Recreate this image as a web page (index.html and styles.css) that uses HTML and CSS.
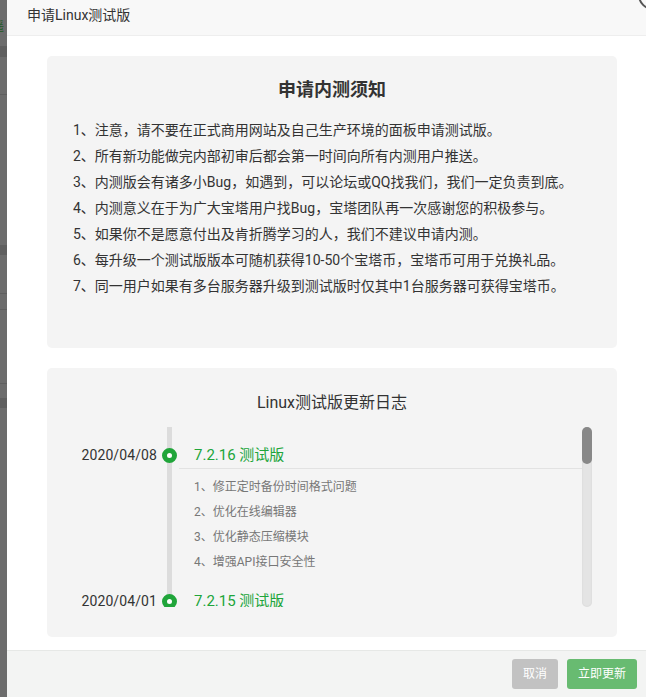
FILE: index.html
```html
<!DOCTYPE html>
<html lang="zh-CN">
<head>
<meta charset="utf-8">
<title>申请Linux测试版</title>
<link rel="stylesheet" href="styles.css">
</head>
<body>
<div class="page">
  <div class="backdrop">
    <span class="bd-row bd-r1"></span>
    <span class="bd-text">遥</span>
    <span class="bd-row bd-r2"></span>
    <span class="bd-row bd-r3"></span>
    <span class="bd-row bd-r4"></span>
    <span class="bd-row bd-r5"></span>
    <span class="bd-row bd-r6"></span>
    <span class="bd-row bd-r7"></span>
    <span class="bd-row bd-r8"></span>
  </div>
  <div class="dialog">
    <span class="close-edge"></span>
    <div class="dlg-head">申请Linux测试版</div>
    <div class="dlg-body">
      <section class="card notice">
        <h2 class="notice-title">申请内测须知</h2>
        <ul class="notice-list">
          <li>1、注意，请不要在正式商用网站及自己生产环境的面板申请测试版。</li>
          <li>2、所有新功能做完内部初审后都会第一时间向所有内测用户推送。</li>
          <li>3、内测版会有诸多小Bug，如遇到，可以论坛或QQ找我们，我们一定负责到底。</li>
          <li>4、内测意义在于为广大宝塔用户找Bug，宝塔团队再一次感谢您的积极参与。</li>
          <li>5、如果你不是愿意付出及肯折腾学习的人，我们不建议申请内测。</li>
          <li>6、每升级一个测试版版本可随机获得10-50个宝塔币，宝塔币可用于兑换礼品。</li>
          <li>7、同一用户如果有多台服务器升级到测试版时仅其中1台服务器可获得宝塔币。</li>
        </ul>
      </section>
      <section class="card log">
        <h3 class="log-title">Linux测试版更新日志</h3>
        <div class="log-scroll">
          <div class="timeline">
            <div class="entry">
              <div class="entry-head">
                <span class="date">2020/04/08</span>
                <span class="dot"></span>
                <span class="ver">7.2.16 测试版</span>
              </div>
              <ul class="changes">
                <li>1、修正定时备份时间格式问题</li>
                <li>2、优化在线编辑器</li>
                <li>3、优化静态压缩模块</li>
                <li>4、增强API接口安全性</li>
              </ul>
            </div>
            <div class="entry">
              <div class="entry-head">
                <span class="date">2020/04/01</span>
                <span class="dot"></span>
                <span class="ver">7.2.15 测试版</span>
              </div>
              <ul class="changes">
                <li>1、修复已知问题</li>
              </ul>
            </div>
          </div>
          <div class="scrollbar"><div class="thumb"></div></div>
        </div>
      </section>
    </div>
    <div class="dlg-foot">
      <button class="btn btn-cancel">取消</button>
      <button class="btn btn-ok">立即更新</button>
    </div>
  </div>
</div>
</body>
</html>
```

FILE: styles.css
```css
* { box-sizing: border-box; }
html, body { margin: 0; padding: 0; }
body {
  width: 646px;
  height: 697px;
  overflow: hidden;
  font-family: Roboto, "Noto Sans CJK SC", sans-serif;
  color: #333;
}
.page {
  display: flex;
  width: 646px;
  height: 697px;
}

/* backdrop strip */
.backdrop {
  width: 7px;
  height: 697px;
  background: #6c6c6c;
  display: flex;
  flex-direction: column;
  overflow: hidden;
}
.bd-row { display: block; width: 7px; background: #5f5f5f; flex: none; }
.bd-text {
  display: block;
  height: 14px;
  margin: 0 0 0 -8px;
  font-size: 12px;
  line-height: 14px;
  color: #1e5a22;
}
.bd-r1 { height: 1px; margin-top: 19px; background: #6c6c6c; }
.bd-r2 { height: 11px; margin-top: 12px; }
.bd-r3 { height: 1px; margin-top: 37px; }
.bd-r4 { height: 10px; margin-top: 150px; }
.bd-r5 { height: 1px; margin-top: 38px; }
.bd-r6 { height: 1px; margin-top: 15px; }
.bd-r7 { height: 1px; margin-top: 73px; }
.bd-r8 { height: 10px; margin-top: 14px; }

/* dialog */
.dialog {
  position: relative;
  flex: 1;
  height: 697px;
  display: flex;
  flex-direction: column;
  background: #fff;
  overflow: hidden;
}
.close-edge {
  position: absolute;
  right: -22px;
  top: -20px;
  width: 30px;
  height: 30px;
  border: 2px solid #555;
  border-radius: 50%;
}
.dlg-head {
  height: 36px;
  padding: 0 0 0 20px;
  background: #f8f8f8;
  border-bottom: 1px solid #eee;
  font-size: 14px;
  line-height: 30px;
  color: #333;
}
.dlg-body {
  flex: 1;
  padding: 20px 29px 0 40px;
  display: flex;
  flex-direction: column;
  gap: 20px;
}
.card {
  background: #f4f4f4;
  border-radius: 5px;
}

/* notice */
.notice {
  height: 292px;
  padding: 22px 0 0 26px;
}
.notice-title {
  margin: 0 0 15px -26px;
  font-size: 18px;
  line-height: 24px;
  font-weight: bold;
  text-align: center;
  color: #333;
}
.notice-list {
  list-style: none;
  margin: 0;
  padding: 0;
  font-size: 14px;
  line-height: 26px;
  color: #333;
}

/* log */
.log {
  height: 269px;
  padding-top: 24px;
}
.log-title {
  margin: 0 0 13px;
  font-size: 16px;
  line-height: 22px;
  font-weight: normal;
  text-align: center;
  color: #333;
}
.log-scroll {
  display: flex;
  height: 180px;
  padding-right: 25px;
}
.timeline {
  flex: 1;
  height: 180px;
  overflow: hidden;
  padding-top: 14px;
  background: linear-gradient(#dcdcdc, #dcdcdc) no-repeat 120px 0 / 5px 100%;
}
.entry-head {
  display: flex;
  align-items: center;
  height: 28px;
}
.date {
  width: 110px;
  margin-right: 5px;
  text-align: right;
  font-size: 14px;
  letter-spacing: 0.1px;
  color: #333;
}
.dot {
  width: 15px;
  height: 15px;
  margin-right: 2px;
  border: 5px solid #20a53a;
  border-radius: 50%;
  background: #fff;
  flex: none;
}
.ver {
  flex: 1;
  align-self: stretch;
  padding-left: 15px;
  line-height: 28px;
  font-size: 15px;
  color: #20a53a;
  border-bottom: 1px solid #e2e2e2;
}
.changes {
  list-style: none;
  margin: 0;
  padding: 6px 0 12px 147px;
  font-size: 12px;
  line-height: 25px;
  color: #777;
}
.scrollbar {
  width: 10px;
  height: 180px;
  border-radius: 5px;
  background: #e4e4e4;
  box-shadow: inset 0 0 2px rgba(0,0,0,0.08);
}
.thumb {
  height: 37px;
  border-radius: 5px;
  background: #888;
}

/* footer */
.dlg-foot {
  height: 47px;
  background: #f3f4f3;
  border-top: 1px solid #e6e8e6;
  display: flex;
  justify-content: flex-end;
  align-items: flex-start;
  gap: 9px;
  padding: 8px 9px 0 0;
}
.btn {
  height: 30px;
  padding: 0 11px;
  border: 0;
  border-radius: 3px;
  font-family: Roboto, "Noto Sans CJK SC", sans-serif;
  font-size: 12px;
  line-height: 30px;
  color: #fff;
}
.btn-cancel { background: #c2c2c2; }
.btn-ok { background: #68bb71; }
```
